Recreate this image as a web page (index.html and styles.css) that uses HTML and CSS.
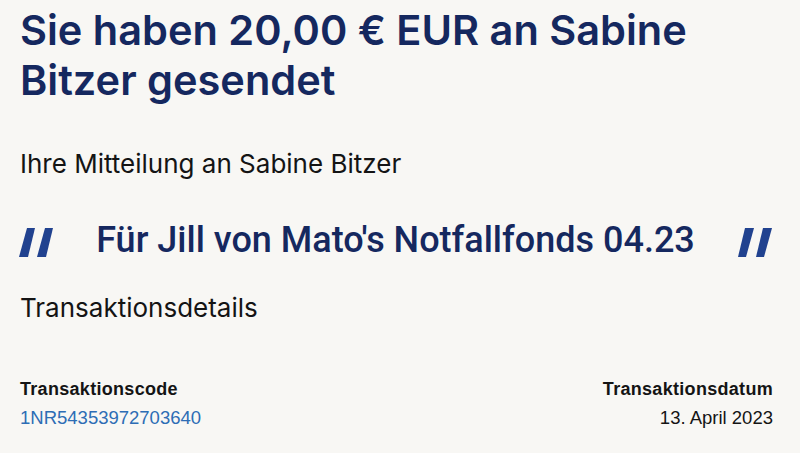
FILE: index.html
```html
<!DOCTYPE html>
<html lang="de">

<head>
    <meta charset="UTF-8">
    <meta name="viewport" content="width=device-width, initial-scale=1.0">
    <title>Zahlung gesendet</title>
    <link rel="stylesheet" href="styles.css">
</head>

<body>
    <div class="container">
        <h1 class="title">Sie haben 20,00 € EUR an Sabine Bitzer gesendet</h1>

        <p class="section-label">Ihre Mitteilung an Sabine Bitzer</p>

        <div class="note">
            <svg class="quote" viewBox="0 0 35 29" aria-hidden="true">
                <path d="M9 0 H17 L10 29 H1 Z" />
                <path d="M27 0 H35 L28 29 H19 Z" />
            </svg>
            <span class="note-text">Für Jill von Mato's Notfallfonds 04.23</span>
            <svg class="quote" viewBox="0 0 35 29" aria-hidden="true">
                <path d="M7 0 H16 L8 29 H0 Z" />
                <path d="M25 0 H34 L26 29 H18 Z" />
            </svg>
        </div>

        <p class="section-label details-label">Transaktionsdetails</p>

        <div class="details">
            <div class="detail">
                <div class="detail-title">Transaktionscode</div>
                <a class="detail-code" href="#">1NR54353972703640</a>
            </div>
            <div class="detail right">
                <div class="detail-title">Transaktionsdatum</div>
                <div class="detail-value">13. April 2023</div>
            </div>
        </div>
    </div>
</body>

</html>
```

FILE: styles.css
```css
body {
    margin: 0;
    background-color: #f8f7f4;
    font-family: Inter, "Liberation Sans", sans-serif;
    color: #141414;
}

.container {
    padding: 0 27px 0 20px;
}

.title {
    margin: 0;
    padding-top: 5px;
    font-size: 41.5px;
    line-height: 50px;
    font-weight: 600;
    color: #15285f;
}

.section-label {
    margin: 0;
    font-size: 26px;
    line-height: 32px;
    font-weight: 400;
    color: #141414;
}

.title + .section-label {
    margin-top: 43px;
}

/* message with the big quote marks */
.note {
    display: flex;
    align-items: center;
    margin: 40px 0 0 -2px;
}

.quote {
    width: 35px;
    height: 29px;
    margin-top: 5px;
    fill: #21428f;
    flex-shrink: 0;
}

.note-text {
    flex: 1;
    text-align: center;
    font-family: Roboto, "Liberation Sans", sans-serif;
    font-size: 36px;
    line-height: 40px;
    font-weight: 500;
    color: #15285f;
}

.details-label {
    margin-top: 32px;
}

.details {
    display: flex;
    justify-content: space-between;
    margin-top: 54px;
}

.detail {
    display: flex;
    flex-direction: column;
    gap: 7px;
}

.detail.right {
    text-align: right;
}

.detail-title {
    font-family: "Liberation Sans", sans-serif;
    font-size: 18px;
    line-height: 22px;
    letter-spacing: 0.3px;
    font-weight: 700;
    color: #141414;
}

.detail-code {
    font-family: "Liberation Sans", sans-serif;
    font-size: 18.5px;
    line-height: 22px;
    color: #2d6db5;
    text-decoration: none;
}

.detail-value {
    font-family: "Liberation Sans", sans-serif;
    font-size: 18.5px;
    line-height: 22px;
    color: #141414;
}
```
